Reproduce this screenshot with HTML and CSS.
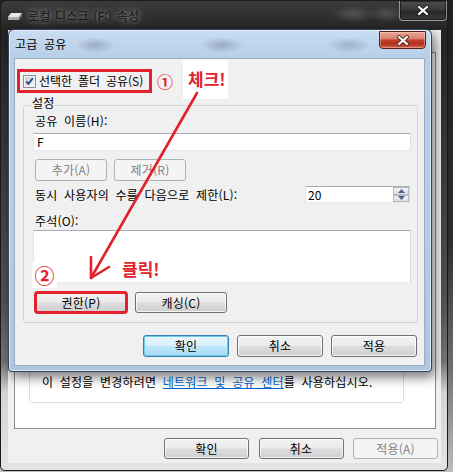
FILE: index.html
```html
<!DOCTYPE html>
<html lang="ko">
<head>
<meta charset="utf-8">
<title>고급 공유</title>
<link rel="stylesheet" href="styles.css">
</head>
<body>
<div class="screen">
  <div class="win">
    <div class="win-title">
      <svg class="drive-icon" width="16" height="9" viewBox="0 0 16 9">
        <polygon points="4,1 15,1 12,5 1,5" fill="#e8e8e8"/>
        <polygon points="1,5 12,5 12,8 1,8" fill="#a9a9a9"/>
        <polygon points="12,5 15,1 15,4 12,8" fill="#7d7d7d"/>
      </svg>
      <span class="win-title-text">로컬 디스크 (F:) 속성</span>
      <div class="win-close">
        <svg width="14" height="11" viewBox="0 0 14 11">
          <path d="M3 2 L11 9 M11 2 L3 9" stroke="#222" stroke-width="4" stroke-linecap="round"/>
          <path d="M3 2 L11 9 M11 2 L3 9" stroke="#fff" stroke-width="2.2" stroke-linecap="round"/>
        </svg>
      </div>
    </div>
    <div class="win-body">
      <div class="win-tabs"></div>
      <div class="tab-panel">
        <div class="info-group">
          <p class="info-text">이 설정을 변경하려면 <span class="link">네트워크 및 공유 센터</span>를 사용하십시오.</p>
        </div>
      </div>
      <div class="win-buttons">
        <div class="btn wbtn">확인</div>
        <div class="btn wbtn">취소</div>
        <div class="btn wbtn disabled">적용(A)</div>
      </div>
    </div>
  </div>

  <div class="dlg">
    <div class="dlg-title">
      <span class="dlg-title-text">고급 공유</span>
      <div class="dlg-close">
        <svg width="14" height="11" viewBox="0 0 14 11">
          <path d="M3 2 L11 9 M11 2 L3 9" stroke="#5a2a22" stroke-width="4" stroke-linecap="round"/>
          <path d="M3 2 L11 9 M11 2 L3 9" stroke="#fff" stroke-width="2.2" stroke-linecap="round"/>
        </svg>
      </div>
    </div>
    <div class="dlg-content">
      <div class="share-row">
        <svg class="checkbox" width="13" height="13" viewBox="0 0 13 13">
          <defs>
            <linearGradient id="cbg" x1="0" y1="0" x2="1" y2="1">
              <stop offset="0" stop-color="#c9ccd3"/>
              <stop offset="1" stop-color="#f6f6f6"/>
            </linearGradient>
          </defs>
          <rect x="0.5" y="0.5" width="12" height="12" fill="#f5f5f5" stroke="#8e8f8f"/>
          <rect x="2" y="2" width="9" height="9" fill="url(#cbg)"/>
          <path d="M3.2 6.4 L5.4 8.8 L9.8 3.3" fill="none" stroke="#24418c" stroke-width="1.8"/>
        </svg>
        <span>선택한 폴더 공유(S)</span>
      </div>
      <fieldset class="settings">
        <legend>설정</legend>
        <div class="field-label">공유 이름(H):</div>
        <div class="textbox">F</div>
        <div class="btn-row">
          <div class="btn disabled small">추가(A)</div>
          <div class="btn disabled small">제거(R)</div>
        </div>
        <div class="limit-row">
          <span>동시 사용자의 수를 다음으로 제한(L):</span>
          <div class="spin">
            <span class="spin-value">20</span>
            <div class="spin-btns">
              <div class="spin-btn">
                <svg width="7" height="4" viewBox="0 0 7 4"><polygon points="0,4 3.5,0 7,4" fill="#4f6389"/></svg>
              </div>
              <div class="spin-btn">
                <svg width="7" height="4" viewBox="0 0 7 4"><polygon points="0,0 7,0 3.5,4" fill="#4f6389"/></svg>
              </div>
            </div>
          </div>
        </div>
        <div class="field-label comment-label">주석(O):</div>
        <div class="textarea"></div>
        <div class="perm-row">
          <div class="btn perm marked">권한(P)</div>
          <div class="btn perm">캐싱(C)</div>
        </div>
      </fieldset>
      <div class="dlg-buttons">
        <div class="btn dbtn default">확인</div>
        <div class="btn dbtn">취소</div>
        <div class="btn dbtn">적용</div>
      </div>
    </div>
  </div>

  <div class="anno anno-1">①</div>
  <div class="anno anno-check">체크!</div>
  <div class="anno anno-2">②</div>
  <div class="anno anno-click">클릭!</div>
  <svg class="anno-arrow" width="453" height="472" viewBox="0 0 453 472">
    <line x1="197" y1="93" x2="91" y2="278" stroke="#e3212d" stroke-width="2.6" stroke-linecap="round"/>
    <polyline points="91,257 91,278 109,267" fill="none" stroke="#e3212d" stroke-width="2.6" stroke-linecap="round" stroke-linejoin="round"/>
  </svg>
</div>
</body>
</html>
```

FILE: styles.css
```css
* { box-sizing: border-box; }
html, body { margin: 0; padding: 0; }
body {
  width: 453px;
  height: 472px;
  overflow: hidden;
  font-family: "Noto Sans CJK KR", "Noto Sans", sans-serif;
  font-size: 12px;
  line-height: 14px;
  color: #000;
  word-spacing: 3px;
  letter-spacing: 0.2px;
}
p { margin: 0; }

.screen {
  position: relative;
  width: 453px;
  height: 472px;
  overflow: hidden;
  background: linear-gradient(#1f1f1f, #2c2c2c 50%, #6f6f6f 78%, #bdbdbd);
}

/* ---------- outer window ---------- */
.win {
  width: 448px;
  height: 471px;
  border: 1px solid #1a1a1a;
  border-radius: 6px 6px 5px 5px;
  display: flex;
  flex-direction: column;
  padding-bottom: 7px;
  background:
    radial-gradient(ellipse 22px 9px at 352px 13px, rgba(255,255,255,.16), transparent),
    radial-gradient(ellipse 18px 8px at 385px 13px, rgba(255,255,255,.14), transparent),
    linear-gradient(#3c3c3c, #242424 30px, #333 120px, #525252 300px, #747474 360px, #d4d4d4 392px, #e4e4e4);
}
.win-title {
  height: 29px;
  display: flex;
  align-items: center;
  padding-left: 6px;
}
.drive-icon { margin-right: 5px; margin-top: 2px; }
.win-title-text {
  color: #141414;
  word-spacing: 1px;
  text-shadow: 0 0 5px rgba(255,255,255,.5), 0 0 11px rgba(255,255,255,.4);
}
.win-close {
  margin-left: auto;
  align-self: flex-start;
  width: 48px;
  height: 20px;
  border: 1px solid rgba(210,210,210,.6);
  border-top: none;
  border-radius: 0 0 4px 4px;
  background: linear-gradient(#505050, #363636 50%, #262626 51%, #3a3a3a);
  box-shadow: inset 0 0 0 1px rgba(0,0,0,.5);
  display: flex;
  align-items: center;
  justify-content: center;
}
.win-body {
  flex: 1;
  margin: 0 6px 0 7px;
  background: #f0f0f0;
  display: flex;
  flex-direction: column;
}
.win-tabs { height: 22px; }
.tab-panel {
  height: 377px;
  margin: 0 5px 0 6px;
  border: 1px solid #898c95;
  background: #fff;
  display: flex;
  flex-direction: column;
  justify-content: flex-end;
  padding: 0 31px 25px 14px;
}
.info-group {
  height: 100px;
  border: 1px solid #d5dfe5;
  border-radius: 3px;
  padding: 0 8px 13px 12px;
  display: flex;
  align-items: flex-end;
  white-space: nowrap;
}
.link { color: #0066cc; text-decoration: underline; }
.win-buttons {
  margin-top: 9px;
  display: flex;
  justify-content: flex-end;
  gap: 9.5px;
  padding-right: 3px;
}

/* ---------- buttons ---------- */
.btn {
  display: flex;
  align-items: center;
  justify-content: center;
  border: 1px solid #707070;
  border-radius: 3px;
  background: linear-gradient(#f2f2f2 0%, #ebebeb 48%, #dddddd 52%, #cfcfcf 100%);
  box-shadow: inset 0 0 0 1px rgba(255,255,255,.75);
  white-space: nowrap;
}
.btn.disabled {
  border-color: #adb2b5;
  background: #f4f4f4;
  color: #838383;
  box-shadow: none;
}
.btn.default {
  border-color: #3c7fb1;
  background: linear-gradient(#eaf6fd 0%, #d9f0fc 48%, #bee6fd 52%, #a7d9f5 100%);
  box-shadow: inset 0 0 0 1px #6ccbef;
}
.wbtn { width: 85px; height: 21px; }
.small { width: 72px; height: 22px; }
.perm { width: 92px; height: 21px; }
.dbtn { width: 86px; height: 22px; }
.marked {
  outline: 3px solid #e3212d;
  outline-offset: -2px;
}

/* ---------- dialog ---------- */
.dlg {
  position: absolute;
  left: 8px;
  top: 29px;
  width: 424px;
  height: 343px;
  border: 1px solid rgba(38,52,72,.9);
  border-radius: 6px 6px 4px 4px;
  padding: 0 6px 5px 5px;
  display: flex;
  flex-direction: column;
  background:
    radial-gradient(ellipse 20px 8px at 86px 15px, rgba(70,82,98,.32), transparent),
    radial-gradient(ellipse 22px 8px at 213px 15px, rgba(70,82,98,.32), transparent),
    radial-gradient(ellipse 22px 8px at 340px 15px, rgba(70,82,98,.28), transparent),
    linear-gradient(#c9ddf2, #b7cfe9 28px, #b2cbe6 200px, #adc7e3);
  box-shadow: 3px 5px 12px rgba(0,0,0,.55), inset 0 0 0 1px rgba(255,255,255,.55);
}
.dlg-title {
  height: 28px;
  display: flex;
  align-items: center;
  padding-left: 1px;
}
.dlg-title-text { color: #000; }
.dlg-close {
  margin-left: auto;
  margin-right: -1px;
  align-self: flex-start;
  margin-top: 1px;
  width: 47px;
  height: 18px;
  border: 1px solid #5c1e14;
  border-radius: 0 0 4px 4px;
  background: linear-gradient(#eaa896 0%, #d9806d 42%, #c2412c 50%, #b3301c 75%, #d2644d 100%);
  box-shadow: inset 0 0 0 1px rgba(255,215,205,.45);
  display: flex;
  align-items: center;
  justify-content: center;
}
.dlg-content {
  flex: 1;
  background: #f0f0f0;
  border: 1px solid #9aabbf;
  display: flex;
  flex-direction: column;
}
.share-row {
  margin: 10px 0 0 2px;
  width: 135px;
  height: 24px;
  border: 3px solid #e3212d;
  display: flex;
  align-items: center;
  gap: 3px;
  padding-left: 3px;
  white-space: nowrap;
  letter-spacing: 0;
  word-spacing: 2.5px;
}
.checkbox { flex: none; margin-top: 1px; }

.settings {
  margin: 3px 6px 0 8px;
  min-width: 0;
  border: 1px solid #d3d3d3;
  border-radius: 3px;
  padding: 0 6px 9px 9px;
  display: flex;
  flex-direction: column;
}
.settings legend {
  padding: 0 1px 4px;
  margin-left: -2px;
  line-height: 14px;
}
.field-label { padding-left: 2px; white-space: nowrap; }
.textbox {
  margin-top: 5px;
  height: 18px;
  border: 1px solid;
  border-color: #abadb3 #dbdfe6 #e3e9ef #e2e3ea;
  background: #fff;
  padding: 0 3px;
  display: flex;
  align-items: center;
}
.btn-row {
  margin-top: 8px;
  display: flex;
  gap: 7px;
  padding-left: 2px;
}
.limit-row {
  margin-top: 5px;
  height: 17px;
  display: flex;
  align-items: center;
  padding-left: 2px;
  white-space: nowrap;
}
.spin {
  margin-left: auto;
  margin-right: 1px;
  width: 105px;
  height: 17px;
  border: 1px solid;
  border-color: #abadb3 #dbdfe6 #e3e9ef #e2e3ea;
  background: #fff;
  display: flex;
  align-items: center;
  padding-left: 2px;
}
.spin-value { flex: 1; }
.spin-btns {
  width: 16px;
  height: 100%;
  display: flex;
  flex-direction: column;
}
.spin-btn {
  flex: 1;
  border: 1px solid #b4b9c2;
  background: linear-gradient(#f3f3f3, #dcdee2);
  display: flex;
  align-items: center;
  justify-content: center;
}
.comment-label { margin-top: 11px; }
.textarea {
  margin-top: 2px;
  height: 53px;
  border: 1px solid;
  border-color: #abadb3 #dbdfe6 #e3e9ef #e2e3ea;
  background: #fff;
}
.perm-row {
  margin-top: 9px;
  display: flex;
  gap: 8px;
  padding-left: 2px;
}
.dlg-buttons {
  margin-top: 12px;
  display: flex;
  justify-content: flex-end;
  gap: 8px;
  padding-right: 7px;
}

/* ---------- annotations ---------- */
.anno {
  position: absolute;
  color: #e3212d;
  font-weight: 700;
  word-spacing: 0;
  letter-spacing: 0;
  white-space: nowrap;
}
.anno-1 { left: 157px; top: 73px; font-size: 16px; line-height: 16px; }
.anno-check {
  left: 183px;
  top: 60px;
  padding: 9px 2px 10px 5px;
  background: #fff;
  font-size: 17px;
  line-height: 20px;
}
.anno-2 {
  left: 32px;
  top: 263px;
  width: 25px;
  height: 25px;
  background: #fff;
  display: flex;
  align-items: center;
  justify-content: center;
  font-size: 20px;
  line-height: 20px;
}
.anno-click { left: 122px; top: 259px; font-size: 17px; line-height: 20px; }
.anno-arrow { position: absolute; left: 0; top: 0; pointer-events: none; }
```
